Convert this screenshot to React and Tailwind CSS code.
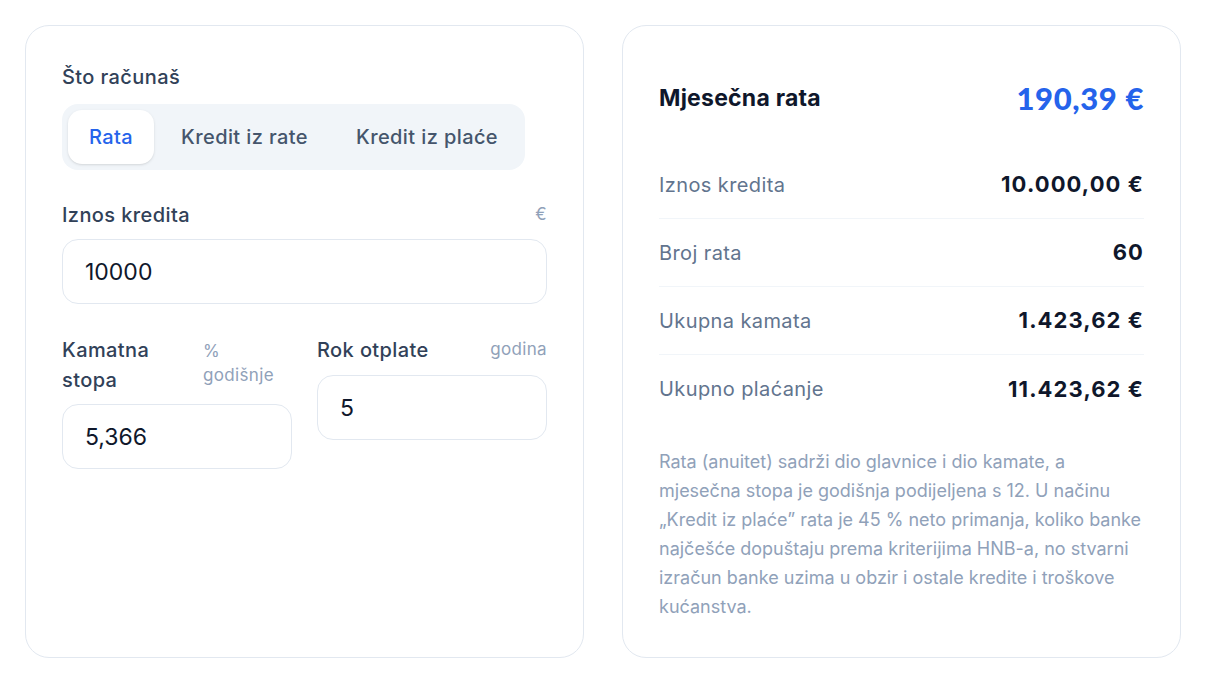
import { useState } from "react";

const modes = ["Rata", "Kredit iz rate", "Kredit iz plaće"];

const results = [
  ["Iznos kredita", "10.000,00 €"],
  ["Broj rata", "60"],
  ["Ukupna kamata", "1.423,62 €"],
  ["Ukupno plaćanje", "11.423,62 €"],
];

const note = [
  "Rata (anuitet) sadrži dio glavnice i dio kamate, a",
  "mjesečna stopa je godišnja podijeljena s 12. U načinu",
  "„Kredit iz plaće” rata je 45 % neto primanja, koliko banke",
  "najčešće dopuštaju prema kriterijima HNB-a, no stvarni",
  "izračun banke uzima u obzir i ostale kredite i troškove",
  "kućanstva.",
];

function Field({ value, className = "" }) {
  return (
    <input
      defaultValue={value}
      className={`w-full h-[65px] rounded-2xl border border-slate-200 bg-white px-[22px] text-[23px] text-slate-900 outline-none ${className}`}
    />
  );
}

export default function App() {
  const [mode, setMode] = useState("Rata");

  return (
    <div className="min-h-screen bg-white p-[25px] font-['Inter',sans-serif]">
      <div className="grid grid-cols-2 gap-[38px] h-[632px]">
        <div className="rounded-3xl border border-slate-200 p-9">
          <p className="text-[20px] leading-[30px] tracking-[0.02em] font-medium text-slate-700">
            Što računaš
          </p>
          <div className="mt-3 inline-flex gap-1.5 rounded-2xl bg-slate-100 p-1.5">
            {modes.map((m) => (
              <button
                key={m}
                onClick={() => setMode(m)}
                className={`h-[54px] px-[21px] rounded-[14px] text-[20px] tracking-[0.02em] font-medium ${
                  mode === m
                    ? "bg-white text-[#2563eb] shadow-sm"
                    : "text-slate-600"
                }`}
              >
                {m}
              </button>
            ))}
          </div>

          <div className="mt-[30px] flex items-center justify-between">
            <span className="text-[20px] leading-[30px] tracking-[0.02em] font-medium text-slate-700">
              Iznos kredita
            </span>
            <span className="text-[17px] tracking-[0.02em] text-slate-400">€</span>
          </div>
          <Field value="10000" className="mt-[9px]" />

          <div className="mt-[31px] grid grid-cols-2 gap-[25px] items-start">
            <div>
              <div className="flex items-start">
                <span className="w-[141px] text-[20px] leading-[30px] tracking-[0.02em] font-medium text-slate-700">
                  Kamatna stopa
                </span>
                <span className="w-[80px] mt-1 text-[17px] leading-6 tracking-[0.02em] text-slate-400">
                  % godišnje
                </span>
              </div>
              <Field value="5,366" className="mt-[9px]" />
            </div>
            <div>
              <div className="flex items-center justify-between">
                <span className="text-[20px] leading-[30px] tracking-[0.02em] font-medium text-slate-700">
                  Rok otplate
                </span>
                <span className="text-[17px] tracking-[0.02em] text-slate-400">godina</span>
              </div>
              <Field value="5" className="mt-[10px]" />
            </div>
          </div>
        </div>

        <div className="rounded-3xl border border-slate-200 p-9">
          <div className="flex items-center justify-between py-4">
            <span className="text-[23px] tracking-[0.01em] font-bold text-slate-900">
              Mjesečna rata
            </span>
            <span className="text-[31px] leading-10 tracking-[0.02em] font-black text-[#2563eb] font-['Lato',sans-serif]">
              190,39 €
            </span>
          </div>
          <div className="mt-[17px]">
            {results.map(([label, value], i) => (
              <div
                key={label}
                className={`flex h-[68px] items-center justify-between ${
                  i < results.length - 1 ? "border-b border-slate-100" : ""
                }`}
              >
                <span className="text-[20px] tracking-[0.02em] text-slate-500">
                  {label}
                </span>
                <span className="text-[22px] tracking-[0.05em] font-bold text-slate-900">
                  {value}
                </span>
              </div>
            ))}
          </div>
          <p className="mt-6 text-[18px] leading-[29px] text-slate-400">
            {note.map((line) => (
              <span key={line} className="block whitespace-nowrap">
                {line}
              </span>
            ))}
          </p>
        </div>
      </div>
    </div>
  );
}
